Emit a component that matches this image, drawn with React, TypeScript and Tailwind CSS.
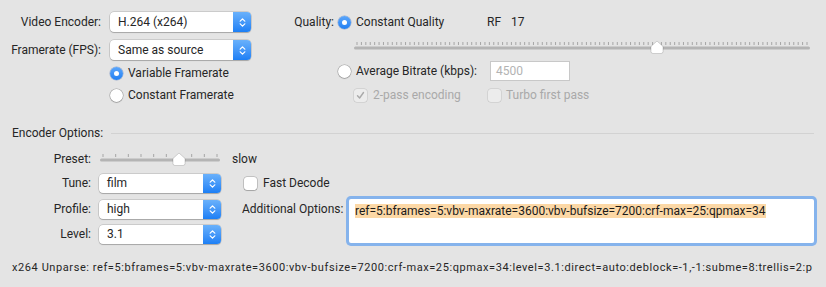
import React from "react";

const Chevrons = () => (
  <svg width="7" height="11" viewBox="0 0 7 11">
    <path d="M1.2 4.2 L3.5 1.8 L5.8 4.2 M1.2 6.8 L3.5 9.2 L5.8 6.8" stroke="white" strokeWidth="1.2" fill="none" strokeLinecap="round" strokeLinejoin="round" />
  </svg>
);

function Popup({ text, className }: { text: string; className: string }) {
  return (
    <div className={"flex items-stretch rounded-[4px] bg-white shadow-[0_0_0_0.5px_rgba(0,0,0,0.22),0_1px_1px_rgba(0,0,0,0.18)] " + className}>
      <div className="flex flex-1 items-center pl-[8px] text-[#262626]">{text}</div>
      <div className="flex w-[18px] items-center justify-center rounded-r-[4px] bg-gradient-to-b from-[#69b1fb] to-[#1b7ff5]">
        <Chevrons />
      </div>
    </div>
  );
}

function Radio({ on }: { on: boolean }) {
  return on ? (
    <div className="flex h-[13px] w-[13px] items-center justify-center rounded-full bg-gradient-to-b from-[#5aa6fb] to-[#1f7ff2] shadow-[0_0_0_0.5px_rgba(0,60,160,0.35)]">
      <div className="h-[5px] w-[5px] rounded-full bg-white" />
    </div>
  ) : (
    <div className="h-[13px] w-[13px] rounded-full bg-white shadow-[0_0_0_0.5px_rgba(0,0,0,0.3),0_1px_1px_rgba(0,0,0,0.15)]" />
  );
}

function Check({ checked, disabled }: { checked?: boolean; disabled?: boolean }) {
  return (
    <div className={"flex h-[13px] w-[13px] items-center justify-center rounded-[3px] " + (disabled ? "bg-[#ececec] shadow-[0_0_0_0.5px_rgba(0,0,0,0.15)]" : "bg-white shadow-[0_0_0_0.5px_rgba(0,0,0,0.3),0_1px_1px_rgba(0,0,0,0.15)]")}>
      {checked && (
        <svg width="9" height="9" viewBox="0 0 9 9">
          <path d="M1.5 4.8 L3.6 7 L7.5 1.5" stroke={disabled ? "#a9a9a9" : "#333"} strokeWidth="1.4" fill="none" strokeLinecap="round" strokeLinejoin="round" />
        </svg>
      )}
    </div>
  );
}

function Slider({ width, ticks, pos }: { width: number; ticks: number; pos: number }) {
  const inner = width - 8;
  const tx = (i: number) => 4 + (inner * i) / (ticks - 1);
  const thumbX = 4 + inner * pos;
  return (
    <svg width={width} height={15} viewBox={`0 0 ${width} 15`}>
      {Array.from({ length: ticks }).map((_, i) => (
        <rect key={i} x={tx(i) - 0.5} y={2} width={1} height={3} fill="#a6a6a6" />
      ))}
      <rect x={1} y={6.5} width={width - 2} height={3} rx={1.5} fill="#b4b4b4" />
      <path
        d={`M${thumbX - 6} 6.5 L${thumbX} 1 L${thumbX + 6} 6.5 L${thumbX + 6} 11.5 Q${thumbX + 6} 13.5 ${thumbX + 4} 13.5 L${thumbX - 4} 13.5 Q${thumbX - 6} 13.5 ${thumbX - 6} 11.5 Z`}
        fill="white"
        stroke="rgba(0,0,0,0.22)"
        strokeWidth="0.7"
      />
    </svg>
  );
}

export default function App() {
  return (
    <div className="h-[287px] w-[826px] overflow-hidden bg-[#e4e4e4] text-[12px] text-[#262626]" style={{ fontFamily: "Roboto, 'Noto Sans', sans-serif" }}>
      {/* Top */}
      <div className="flex pt-[12px]">
        <div className="w-[289px] shrink-0">
          <div className="flex h-[20px] items-center">
            <div className="w-[102px] pr-[1px] text-right">Video Encoder:</div>
            <Popup text="H.264 (x264)" className="ml-[8px] h-[20px] w-[141px]" />
          </div>
          <div className="mt-[8px] flex h-[20px] items-center">
            <div className="w-[102px] pr-[1px] text-right">Framerate (FPS):</div>
            <Popup text="Same as source" className="ml-[8px] h-[20px] w-[141px]" />
          </div>
          <div className="mt-[3px] flex h-[20px] items-center pl-[110px]">
            <Radio on />
            <span className="ml-[5px]">Variable Framerate</span>
          </div>
          <div className="mt-[2px] flex h-[20px] items-center pl-[110px]">
            <Radio on={false} />
            <span className="ml-[5px]">Constant Framerate</span>
          </div>
        </div>
        <div className="flex-1">
          <div className="flex h-[20px] items-center">
            <div className="w-[45px] text-right">Quality:</div>
            <div className="ml-[4px]"><Radio on /></div>
            <span className="ml-[5px] w-[131px]">Constant Quality</span>
            <span>RF</span>
            <span className="ml-[10px]">17</span>
          </div>
          <div className="mt-[8px] pl-[64px]">
            <Slider width={458} ticks={103} pos={34 / 51} />
          </div>
          <div className="mt-[6px] flex h-[20px] items-center">
            <div className="ml-[49px]"><Radio on={false} /></div>
            <span className="ml-[5px] w-[135px]">Average Bitrate (kbps):</span>
            <div className="flex h-[18px] w-[78px] items-center bg-white pl-[5px] text-[#b3b3b3] shadow-[0_0_0_1px_rgba(0,0,0,0.12)]">4500</div>
          </div>
          <div className="mt-[4px] flex h-[20px] items-center text-[#a9a9a9]">
            <div className="ml-[65px]"><Check checked disabled /></div>
            <span className="ml-[6px] w-[115px]">2-pass encoding</span>
            <Check disabled />
            <span className="ml-[5px]">Turbo first pass</span>
          </div>
        </div>
      </div>

      {/* Encoder Options header */}
      <div className="mt-[18px] flex h-[20px] items-center pl-[12px] pr-[12px]">
        <span>Encoder Options:</span>
        <div className="ml-[8px] h-px flex-1 bg-[#d2d2d2]" />
      </div>

      {/* Preset */}
      <div className="mt-[6px] flex h-[20px] items-center">
        <div className="w-[91px] text-right">Preset:</div>
        <div className="ml-[8px]"><Slider width={122} ticks={10} pos={6 / 9} /></div>
        <span className="ml-[11px]">slow</span>
      </div>

      <div className="flex">
        <div className="w-[244px] shrink-0">
          <div className="mt-[4px] flex h-[20px] items-center">
            <div className="w-[91px] text-right">Tune:</div>
            <Popup text="film" className="ml-[8px] h-[19px] w-[122px]" />
          </div>
          <div className="mt-[6px] flex h-[20px] items-center">
            <div className="w-[91px] text-right">Profile:</div>
            <Popup text="high" className="ml-[8px] h-[19px] w-[122px]" />
          </div>
          <div className="mt-[5px] flex h-[20px] items-center">
            <div className="w-[91px] text-right">Level:</div>
            <Popup text="3.1" className="ml-[8px] h-[19px] w-[122px]" />
          </div>
        </div>
        <div className="flex-1">
          <div className="mt-[4px] flex h-[20px] items-center">
            <Check />
            <span className="ml-[6px]">Fast Decode</span>
          </div>
          <div className="mt-[6px] flex">
            <div className="ml-[-2px] mt-[1px] w-[107px]">Additional Options:</div>
            <div className="h-[44px] w-[465px] rounded-[2px] bg-white px-[6px] pt-[3px] shadow-[0_0_0_3px_#85b3ec]">
              <span className="bg-[#fcd8a6] text-[#1a1a1a]">ref=5:bframes=5:vbv-maxrate=3600:vbv-bufsize=7200:crf-max=25:qpmax=34</span>
            </div>
          </div>
        </div>
      </div>

      <div className="mt-[16px] whitespace-nowrap pl-[12px] text-[11px] tracking-[0.58px]">
        x264 Unparse: ref=5:bframes=5:vbv-maxrate=3600:vbv-bufsize=7200:crf-max=25:qpmax=34:level=3.1:direct=auto:deblock=-1,-1:subme=8:trellis=2:p
      </div>
    </div>
  );
}
